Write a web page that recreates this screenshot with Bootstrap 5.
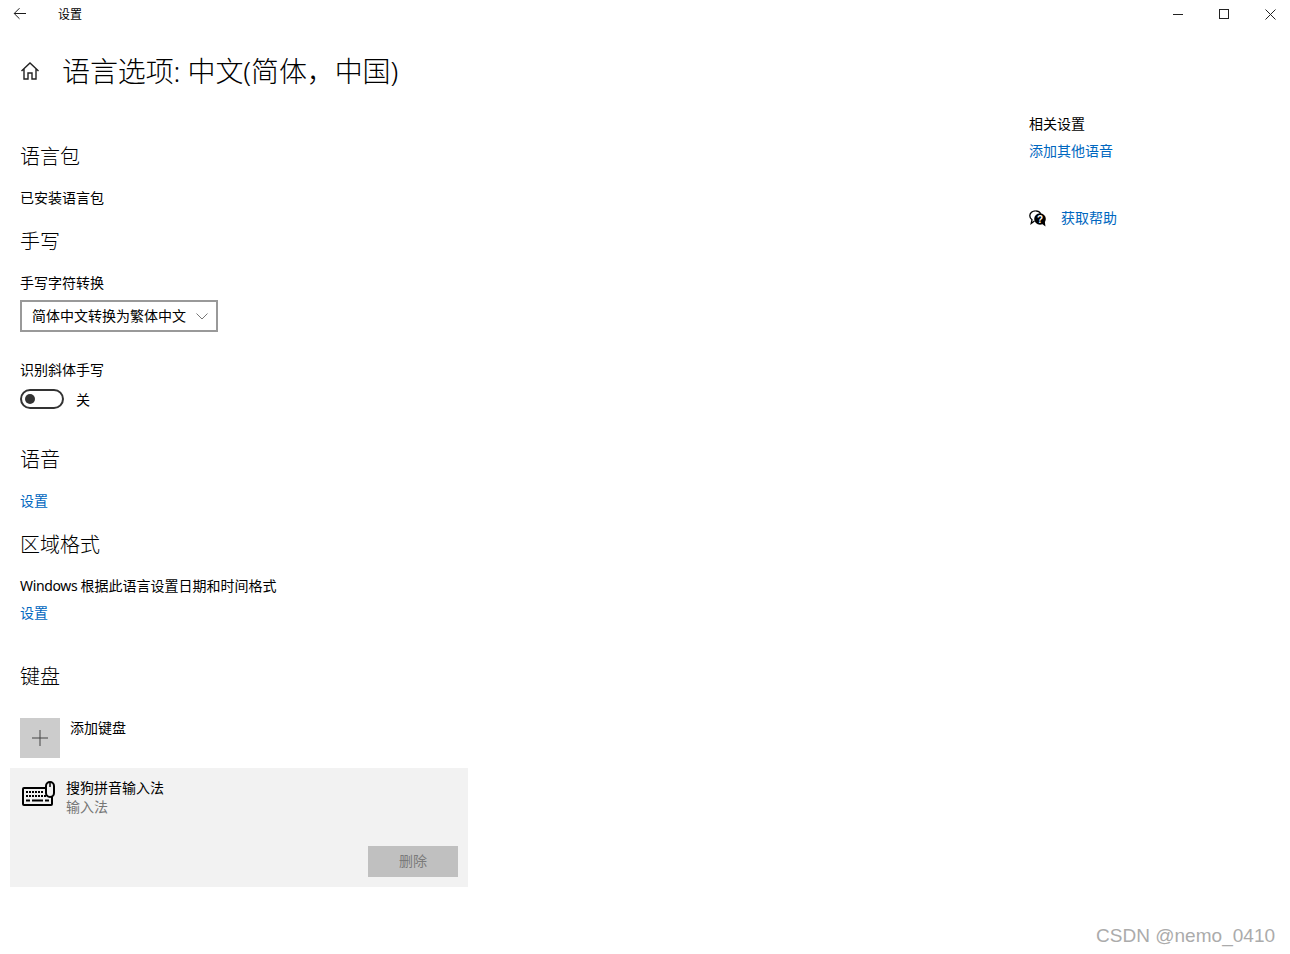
<!DOCTYPE html>
<html lang="zh-CN">
<head>
<meta charset="utf-8">
<title>设置</title>
<link href="https://cdn.jsdelivr.net/npm/bootstrap@5.3.0/dist/css/bootstrap.min.css" rel="stylesheet">
<style>
html,body{height:100%}
body{background:#fff;color:#000;font-family:"Noto Sans","Noto Sans CJK SC",sans-serif;font-size:14px;line-height:20px;overflow:hidden}
.app-shell{position:relative;height:954px}
.title-bar{height:28px}
.back-btn{width:40px;padding-left:13px;line-height:0}
.bar-label{font-size:12px;margin:2px 0 0 18px;color:#000}
.win-btn{width:46px;height:28px;line-height:0}
.win-controls{margin-right:-3px}
.page-head{margin-top:23px;height:40px;padding-left:20px}
.page-title{font-size:28px;line-height:40px;font-weight:300;margin:0 0 0 22px;color:#000;letter-spacing:-.1px}
.main-col{width:1029px;flex:none;padding-left:20px}
.side-col{padding-top:23px}
.sec-title{font-size:20px;line-height:28px;font-weight:300;margin:0;color:#000}
.t1{margin-top:52px}.t2{margin-top:20px}.t3{margin-top:37px}.t4{margin-top:40px}
.line{margin:18px 0 0}
.sec-title + .line{margin-top:17px}
.line-gap{margin-top:7px}
.latin-word{letter-spacing:-.36px}
.ms-link{color:#0067c0;text-decoration:none}
.combo{width:198px;height:32px;border:2px solid #999;background:#fff;margin-top:7px;padding:0 8px 0 10px;font-size:14px;border-radius:0;color:#000}
.line-28{margin-top:28px}
.switch-row{margin-top:9px;height:20px}
.switch-track{width:44px;height:20px;border:2px solid #333;border-radius:10px;padding-left:3px}
.switch-dot{width:10px;height:10px;border-radius:50%;background:#333}
.switch-text{margin:2px 0 0 12px}
.add-row{margin-top:27px;height:40px}
.add-tile{width:40px;height:40px;background:#ccc;line-height:0}
.add-text{margin-left:10px;line-height:20px}
.ime-panel{width:458px;height:119px;margin:10px 0 0 -10px;background:#f2f2f2;padding:10px 10px 10px 12px}
.ime-icon{width:44px;line-height:0;padding-top:3px}
.ime-sub{color:#767676;font-size:14px;line-height:18px;margin-top:0}
.ime-name{line-height:20px}
.del-btn{width:90px;height:31px;background:#c0c0c0;color:#7a7a7a;border:0;border-radius:0;font-size:14px;padding:0 0 2px;line-height:29px}
.side-head{line-height:20px}
.side-link{margin-top:7px}
.help-row{margin-top:47px}
.help-icon{width:32px;line-height:0}
.csdn-mark{position:absolute;left:1096px;top:924px;font-family:"Liberation Sans",sans-serif;font-size:19px;line-height:24px;color:#ababab;letter-spacing:.02px}
</style>
</head>
<body>
<div class="app-shell">
  <div class="title-bar d-flex align-items-center">
    <div class="back-btn">
      <svg width="14" height="14" viewBox="0 0 14 14" fill="none" stroke="#1a1a1a" stroke-width="1"><path d="M13 6.500H1.200M6.500 1.200 1.200 6.500l5.300 5.300"/></svg>
    </div>
    <span class="bar-label">设置</span>
    <div class="win-controls ms-auto d-flex">
      <div class="win-btn d-flex align-items-center justify-content-center"><svg width="10" height="10" viewBox="0 0 10 10" stroke="#222" fill="none"><path d="M0 5.500h10"/></svg></div>
      <div class="win-btn d-flex align-items-center justify-content-center"><svg width="10" height="10" viewBox="0 0 10 10" stroke="#222" fill="none"><rect x=".5" y=".5" width="9" height="9"/></svg></div>
      <div class="win-btn d-flex align-items-center justify-content-center"><svg width="11" height="11" viewBox="0 0 11 11" stroke="#222" fill="none"><path d="M.5.5l10 10M10.500.5l-10 10"/></svg></div>
    </div>
  </div>

  <div class="page-head d-flex align-items-center">
    <svg width="20" height="20" viewBox="0 0 20 20" fill="none" stroke="#222" stroke-width="1.400"><path d="M1.500 10 10 2l8.500 8M4 8v10h4v-6h4v6h4V8"/></svg>
    <h1 class="page-title">语言选项: 中文(简体，中国)</h1>
  </div>

  <div class="d-flex">
    <div class="main-col">
      <h2 class="sec-title t1">语言包</h2>
      <p class="line">已安装语言包</p>
      <h2 class="sec-title t2">手写</h2>
      <p class="line">手写字符转换</p>
      <div class="combo d-flex align-items-center justify-content-between">
        <span>简体中文转换为繁体中文</span>
        <svg width="12" height="7" viewBox="0 0 12 7" fill="none" stroke="#777"><path d="M.5.5 6 6l5.500-5.500"/></svg>
      </div>
      <p class="line line-28">识别斜体手写</p>
      <div class="switch-row d-flex align-items-center">
        <div class="switch-track d-flex align-items-center"><span class="switch-dot"></span></div>
        <span class="switch-text">关</span>
      </div>
      <h2 class="sec-title t3">语音</h2>
      <p class="line"><a class="ms-link" href="#">设置</a></p>
      <h2 class="sec-title t2">区域格式</h2>
      <p class="line"><span class="latin-word">Windows </span>根据此语言设置日期和时间格式</p>
      <p class="line line-gap"><a class="ms-link" href="#">设置</a></p>
      <h2 class="sec-title t4">键盘</h2>
      <div class="add-row d-flex align-items-start">
        <div class="add-tile d-flex align-items-center justify-content-center">
          <svg width="16" height="16" viewBox="0 0 16 16" stroke="#444" fill="none"><path d="M8 0v16M0 8h16"/></svg>
        </div>
        <span class="add-text">添加键盘</span>
      </div>
      <div class="ime-panel d-flex flex-column">
        <div class="d-flex">
          <div class="ime-icon">
            <svg width="33" height="26" viewBox="0 0 33 26" fill="none" stroke="#000"><path d="M24 7H2a1 1 0 0 0-1 1v15a1 1 0 0 0 1 1h27a1 1 0 0 0 1-1v-8" stroke-width="2"/><rect x="24" y="1" width="8" height="15" rx="4" fill="#f2f2f2" stroke-width="2"/><path d="M28 1v5" stroke-width="1.500"/><path d="M4 11h18M4 15h22" stroke-width="2" stroke-dasharray="2 1"/><path d="M4 19.500h4M10 19.500h11M23 19.500h4" stroke-width="2"/></svg>
          </div>
          <div>
            <div class="ime-name">搜狗拼音输入法</div>
            <div class="ime-sub">输入法</div>
          </div>
        </div>
        <div class="mt-auto d-flex justify-content-end">
          <button class="btn del-btn" type="button">删除</button>
        </div>
      </div>
    </div>
    <div class="side-col">
      <div class="side-head">相关设置</div>
      <div class="side-link"><a class="ms-link" href="#">添加其他语音</a></div>
      <div class="help-row d-flex align-items-center">
        <div class="help-icon">
          <svg width="18" height="17" viewBox="0 0 18 17"><path d="M6.500.8C3.300.8.800 3 .8 5.800c0 1.700.9 3.100 2.200 4L2.200 13.500 5.500 11" fill="#fff" stroke="#000" stroke-width="1.300"/><path d="M6.500.8c2.500 0 4.500 1.300 5.300 3" fill="none" stroke="#000" stroke-width="1.300"/><circle cx="11" cy="9" r="5.800" fill="#000"/><path d="M12.500 13.500l4 3-.8-5.500z" fill="#000"/><text x="11" y="12.500" font-size="10" font-weight="700" fill="#fff" text-anchor="middle" font-family="Liberation Sans">?</text></svg>
        </div>
        <a class="ms-link" href="#">获取帮助</a>
      </div>
    </div>
  </div>
  <div class="csdn-mark">CSDN @nemo_0410</div>
</div>
<script src="https://cdn.jsdelivr.net/npm/bootstrap@5.3.0/dist/js/bootstrap.bundle.min.js"></script>
</body>
</html>
